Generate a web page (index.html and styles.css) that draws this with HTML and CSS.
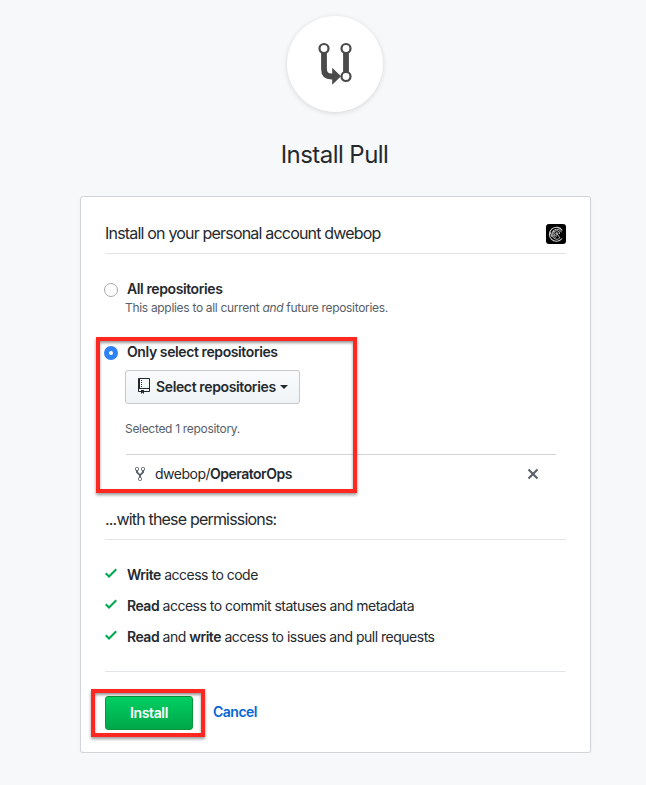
FILE: index.html
```
<!DOCTYPE html>
<html lang="en">
<head>
<meta charset="utf-8">
<title>Install Pull</title>
<link rel="stylesheet" href="styles.css">
</head>
<body>
<main class="page">
  <div class="logo">
    <svg width="96" height="96" viewBox="0 0 96 96" fill="none" stroke="#4a4a4a">
      <path d="M37 37v16q0 7.500 7.500 7.500h2M59 37v19" stroke-width="5.800"/>
      <path d="M45.200 51.800v17l8.800-8.500z" fill="#4a4a4a" stroke="none"/>
      <g fill="#fff" stroke-width="2.200"><circle cx="37" cy="32.500" r="4.500"/><circle cx="59" cy="32.500" r="4.500"/><circle cx="59" cy="60.500" r="4.500"/></g>
    </svg>
  </div>
  <h1 class="title">Install Pull</h1>
  <section class="card">
    <header class="heading">
      <h2 class="heading-text account-text">Install on your personal account dwebop</h2>
      <svg class="avatar" width="20" height="20" viewBox="0 0 20 20" fill="none" stroke="#ccc">
        <rect width="20" height="20" rx="3" fill="#000" stroke="none"/>
        <path d="M16.300 6.500A7 7 0 1 0 16 14.500" stroke-width="1.100"/>
        <path d="M15.500 8.300A5 5 0 1 0 13.500 14.500M8.300 6.500A4 4 0 0 0 9.500 13.500M13.500 10A2.800 2.800 0 1 0 11 12.200M10.500 9l3.500 5M4 8l2 5" stroke-width=".9"/>
        <circle cx="10.800" cy="9.600" r="1" stroke-width=".9"/>
      </svg>
    </header>
    <div class="option all">
      <span class="radio"></span>
      <div><b class="label">All repositories</b><p class="note all-note">This applies to all current <i>and</i> future repositories.</p></div>
    </div>
    <div class="option only">
      <span class="radio checked"></span>
      <b class="label">Only select repositories</b>
    </div>
    <div class="selection">
      <button class="btn select">
        <svg width="12" height="16" viewBox="0 0 12 16" fill="#24292e"><path d="M4 9H3V8h1v1zm0-3H3v1h1V6zm0-2H3v1h1V4zm0-2H3v1h1V2zm8-1v12c0 .55-.45 1-1 1H6v2l-1.500-1.500L3 16v-2H1c-.55 0-1-.45-1-1V1c0-.55.45-1 1-1h10c.55 0 1 .45 1 1zm-1 10H1v2h2v-1h3v1h5v-2zm0-10H2v9h9V1z"/></svg>
        <span class="select-text">Select repositories</span><span class="caret"></span>
      </button>
      <p class="note count">Selected 1 repository.</p>
      <div class="repo">
        <svg width="10" height="16" viewBox="0 0 10 16" fill="#586069"><path d="M8 1a1.993 1.993 0 0 0-1 3.720V6L5 8 3 6V4.720A1.993 1.993 0 0 0 2 1a1.993 1.993 0 0 0-1 3.720V6.500l3 3v1.780A1.993 1.993 0 0 0 5 15a1.993 1.993 0 0 0 1-3.720V9.500l3-3V4.720A1.993 1.993 0 0 0 8 1zM2 4.200C1.340 4.200.8 3.650.8 3c0-.65.55-1.200 1.200-1.200.65 0 1.200.55 1.200 1.200 0 .65-.55 1.200-1.200 1.200zm3 10c-.66 0-1.200-.55-1.200-1.200 0-.65.55-1.200 1.200-1.200.65 0 1.200.55 1.200 1.200 0 .65-.55 1.200-1.200 1.200zm3-10c-.66 0-1.200-.55-1.200-1.200 0-.65.55-1.200 1.200-1.200.65 0 1.200.55 1.200 1.200 0 .65-.55 1.200-1.200 1.200z"/></svg>
        <span class="repo-name">dwebop/<b>OperatorOps</b></span>
        <svg class="remove" width="12" height="16" viewBox="0 0 12 16" fill="#586069"><path d="M7.480 8l3.750 3.750-1.480 1.480L6 9.480l-3.750 3.750-1.480-1.480L4.520 8 .77 4.250l1.480-1.480L6 6.520l3.750-3.750 1.480 1.480L7.480 8z"/></svg>
      </div>
    </div>
    <header class="heading permissions"><h2 class="heading-text">...with these permissions:</h2></header>
    <ul class="list">
      <li><svg width="12" height="16" viewBox="0 0 12 16"><path fill="#00a84f" d="M12 5l-8 8-4-4 1.500-1.500L4 10l6.500-6.500L12 5z"/></svg><span><b>Write</b> access to code</span></li>
      <li><svg width="12" height="16" viewBox="0 0 12 16"><path fill="#00a84f" d="M12 5l-8 8-4-4 1.500-1.500L4 10l6.500-6.500L12 5z"/></svg><span><b>Read</b> access to commit statuses and metadata</span></li>
      <li><svg width="12" height="16" viewBox="0 0 12 16"><path fill="#00a84f" d="M12 5l-8 8-4-4 1.500-1.500L4 10l6.500-6.500L12 5z"/></svg><span><b>Read</b> and <b>write</b> access to issues and pull requests</span></li>
    </ul>
    <footer class="actions"><button class="btn install">Install</button><a class="cancel">Cancel</a></footer>
    <div class="mark mark-repos"></div>
    <div class="mark mark-install"></div>
  </section>
</main>
</body>
</html>
```
FILE: styles.css
```
* { box-sizing: border-box; }
body {
  margin: 0;
  background: #f6f8fa;
  color: #24292e;
  font: 14px/20px Inter, "Liberation Sans", sans-serif;
  letter-spacing: -0.5px;
}
b { font-weight: 600; }
h1, h2, p, ul { margin: 0; padding: 0; font-weight: 400; }
svg { display: block; flex: none; }
span, b, h2, p { white-space: nowrap; }

.page { width: 511px; margin-left: 80px; padding-top: 16px; }
.logo {
  width: 96px;
  height: 96px;
  margin-left: 207px;
  border-radius: 50%;
  background: #fff;
  box-shadow: 0 1px 5px rgba(27, 31, 35, .15);
}
.title {
  height: 36px;
  margin: 25px 0 23px;
  padding-right: 2px;
  font-size: 24px;
  line-height: 36px;
  letter-spacing: -0.55px;
  text-align: center;
}
.card {
  position: relative;
  height: 557px;
  padding: 0 24px;
  border: 1px solid #d1d5da;
  border-radius: 3px;
  background: #fff;
  box-shadow: 0 1px 2px rgba(27, 31, 35, .08);
}
.heading {
  display: flex;
  align-items: center;
  justify-content: space-between;
  height: 57px;
  padding-top: 17px;
  border-bottom: 1px solid #e1e4e8;
}
.heading-text { font-size: 16px; line-height: 24px; letter-spacing: -0.81px; }
.account-text { margin-top: -2px; }
.option { display: flex; letter-spacing: -0.4px; }
.all { height: 63px; margin-top: 25px; }
.only { height: 28px; }
.radio {
  flex: none;
  width: 14px;
  height: 14px;
  margin: 4px 8px 0 -1px;
  border: 1px solid #aaa;
  border-radius: 50%;
  background: #fff;
}
.radio.checked { border: 5px solid #2f81f7; }
.label { display: block; margin-left: 1px; }
.note { color: #586069; font-size: 12px; line-height: 18px; letter-spacing: -0.31px; }
.all-note { margin-left: -1px; }
.selection { margin-left: 20px; }
.btn {
  display: flex;
  align-items: center;
  height: 34px;
  border-radius: 3px;
  font: 600 14px/20px Inter, "Liberation Sans", sans-serif;
  letter-spacing: -0.37px;
}
.select {
  width: 175px;
  padding: 0 11px 0 12px;
  border: 1px solid #c5c9cd;
  background: linear-gradient(#fafbfc, #eff3f6);
  color: #24292e;
}
.select svg { margin: -3px 6px 0 0; }
.caret {
  margin-left: 4px;
  border: 4px solid transparent;
  border-top-color: #24292e;
  border-bottom: 0;
}
.count { margin-top: 16px; }
.repo {
  display: flex;
  align-items: center;
  width: 430px;
  height: 38px;
  margin: 16px 0 2px 1px;
  padding-left: 9px;
  border-top: 1px solid #d1d5da;
}
.repo svg { margin-top: 1px; }
.repo-name { margin-left: 10px; }
.repo .remove { margin: 1px 17px 0 auto; }
.permissions { height: 46px; padding-top: 5px; }
.list { height: 132px; padding-top: 19px; border-bottom: 1px solid #e1e4e8; list-style: none; }
.list li { display: flex; align-items: center; height: 31px; }
.list svg { margin: -3px 10px 0 0; }
.actions { display: flex; margin-top: 24px; }
.install {
  justify-content: center;
  width: 88px;
  border: 1px solid #08963d;
  background: linear-gradient(#00d063, #00a648);
  color: #fff;
}
.cancel { margin: 6px 0 0 20px; color: #0366d6; font-weight: 600; }
.mark {
  position: absolute;
  border: 4px solid #ff2820;
  box-shadow: 0 2px 3px rgba(0, 0, 0, .4), inset 0 2px 3px rgba(0, 0, 0, .4);
  pointer-events: none;
}
.mark-repos { left: 15px; top: 140px; width: 261px; height: 156px; }
.mark-install { left: 10px; top: 492px; width: 114px; height: 48px; }
```
